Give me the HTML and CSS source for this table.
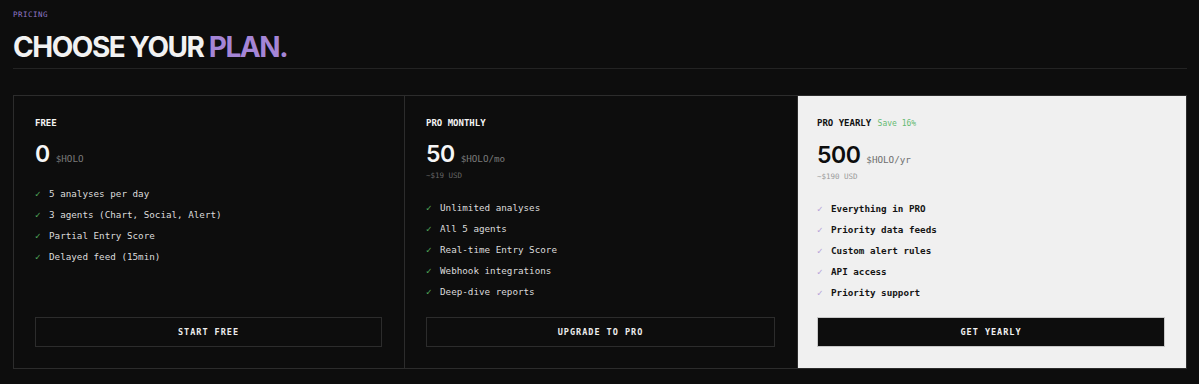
FILE: index.html
```html
<!DOCTYPE html>
<html>
<head>
<meta charset="utf-8">
<link rel="stylesheet" href="styles.css">
</head>
<body>
<section class="pricing">
  <div class="eyebrow">PRICING</div>
  <h1 class="title">CHOOSE YOUR <span class="accent">PLAN.</span></h1>
  <div class="divider"></div>
  <div class="plans">
    <div class="plan">
      <div class="plan-name">FREE</div>
      <div class="price"><span class="amount">0</span><span class="unit">$HOLO</span></div>
      <ul class="features">
        <li><span class="check">✓</span>5 analyses per day</li>
        <li><span class="check">✓</span>3 agents (Chart, Social, Alert)</li>
        <li><span class="check">✓</span>Partial Entry Score</li>
        <li><span class="check">✓</span>Delayed feed (15min)</li>
      </ul>
      <button class="btn">START FREE</button>
    </div>
    <div class="plan">
      <div class="plan-name">PRO MONTHLY</div>
      <div class="price"><span class="amount">50</span><span class="unit">$HOLO/mo</span></div>
      <div class="usd">~$19 USD</div>
      <ul class="features">
        <li><span class="check">✓</span>Unlimited analyses</li>
        <li><span class="check">✓</span>All 5 agents</li>
        <li><span class="check">✓</span>Real-time Entry Score</li>
        <li><span class="check">✓</span>Webhook integrations</li>
        <li><span class="check">✓</span>Deep-dive reports</li>
      </ul>
      <button class="btn">UPGRADE TO PRO</button>
    </div>
    <div class="plan plan-featured">
      <div class="plan-name">PRO YEARLY <span class="save">Save 16%</span></div>
      <div class="price"><span class="amount">500</span><span class="unit">$HOLO/yr</span></div>
      <div class="usd">~$190 USD</div>
      <ul class="features">
        <li><span class="check">✓</span>Everything in PRO</li>
        <li><span class="check">✓</span>Priority data feeds</li>
        <li><span class="check">✓</span>Custom alert rules</li>
        <li><span class="check">✓</span>API access</li>
        <li><span class="check">✓</span>Priority support</li>
      </ul>
      <button class="btn btn-dark">GET YEARLY</button>
    </div>
  </div>
</section>
</body>
</html>
```

FILE: styles.css
```css
html, body {
  margin: 0;
  padding: 0;
  background: #0d0d0d;
}
body {
  font-family: "DejaVu Sans Mono", "Liberation Mono", monospace;
  color: #e8e8e8;
}
.pricing {
  padding: 10px 12px 0 13px;
}
.eyebrow {
  font-size: 7.5px;
  line-height: 10px;
  color: #8f78c8;
  letter-spacing: 0.5px;
}
.title {
  margin: 12px 0 0 0;
  font-family: "Inter", "Liberation Sans", sans-serif;
  font-weight: 700;
  font-size: 28px;
  line-height: 30px;
  letter-spacing: -1.45px;
  color: #f2f2f2;
}
.accent {
  color: #a585d6;
}
.divider {
  height: 1px;
  background: #232323;
  margin-top: 6px;
}
.plans {
  margin-top: 26px;
  display: grid;
  grid-template-columns: 390px 393px 1fr;
  border: 1px solid #2c2c2c;
  height: 272px;
}
.plan {
  display: flex;
  flex-direction: column;
  padding: 21px 22px 21px 21px;
  min-width: 0;
}
.plan + .plan {
  border-left: 1px solid #2c2c2c;
}
.plan-featured {
  background: #f0f0f0;
  color: #111;
  padding-left: 19px;
  padding-right: 21px;
}
.plan-name {
  font-weight: 700;
  font-size: 9px;
  line-height: 12px;
  color: #f4f4f4;
}
.plan-featured .plan-name {
  color: #111;
}
.save {
  font-weight: 400;
  font-size: 8px;
  color: #66bb73;
  margin-left: 1px;
}
.price {
  margin-top: 13px;
  display: flex;
  align-items: baseline;
  gap: 6px;
}
.amount {
  font-family: "Inter", "Liberation Sans", sans-serif;
  font-weight: 600;
  font-size: 23px;
  line-height: 24px;
  letter-spacing: -0.5px;
  color: #f6f6f6;
}
.plan-featured .amount {
  color: #0d0d0d;
}
.unit {
  font-size: 9.25px;
  color: #7a7a7a;
}
.plan-featured .unit {
  color: #6e6e6e;
}
.usd {
  margin-top: 5px;
  font-size: 7.5px;
  line-height: 10px;
  color: #666;
}
.plan-featured .usd {
  color: #9a9a9a;
}
.features {
  list-style: none;
  margin: 20px 0 0 0;
  padding: 0;
}
.plan:first-child .features {
  margin-top: 21px;
}
.features li {
  font-size: 9.25px;
  line-height: 13px;
  margin-bottom: 8px;
  color: #dcdcdc;
  display: flex;
  align-items: center;
}
.plan-featured .features li {
  color: #141414;
  font-weight: 700;
}
.check {
  width: 14px;
  font-size: 9.5px;
  color: #4fa85a;
  flex: none;
}
.plan-featured .check {
  color: #b6a2d8;
  font-weight: 400;
}
.btn {
  margin-top: auto;
  height: 30px;
  background: transparent;
  border: 1px solid #2c2c2c;
  color: #ececec;
  font-family: "DejaVu Sans Mono", "Liberation Mono", monospace;
  font-weight: 700;
  font-size: 8.5px;
  letter-spacing: 1px;
  cursor: pointer;
}
.btn-dark {
  background: #0d0d0d;
  border-color: #c8c8c8;
  color: #f2f2f2;
}
```
